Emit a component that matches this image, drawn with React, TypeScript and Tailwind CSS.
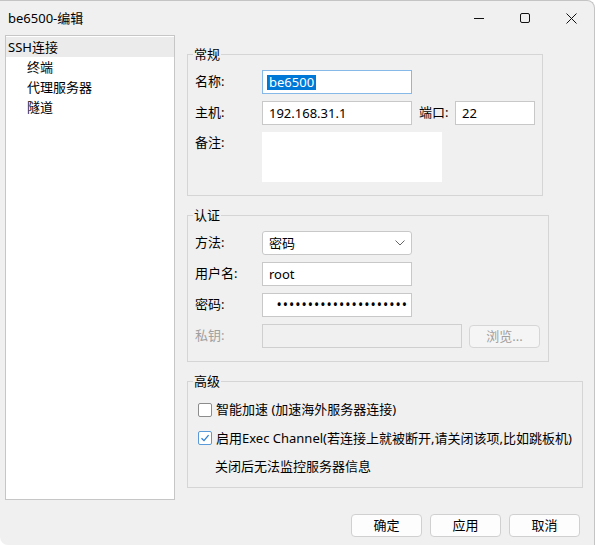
import { useState } from "react";

const font = "font-['Noto_Sans','Noto_Sans_CJK_SC',sans-serif]";

const treeItems = [
    { id: "ssh", title: "SSH连接", depth: 0 },
    { id: "term", title: "终端", depth: 1 },
    { id: "proxy", title: "代理服务器", depth: 1 },
    { id: "tunnel", title: "隧道", depth: 1 },
];

const Group = ({ title, width, children }: { title: string; width: string; children: React.ReactNode }) => (
    <fieldset className={`${width} border border-[#d5d5d5] px-[7px]`}>
        <legend className="px-[1px] ml-[-2px] text-[13px] leading-[17px]">{title}</legend>
        {children}
    </fieldset>
);

const Row = ({ label, disabled, children }: { label: string; disabled?: boolean; children: React.ReactNode }) => (
    <div className="flex items-center h-[24px]">
        <span className={`w-[67px] shrink-0 ${disabled ? "text-[#a0a0a0]" : "text-black"}`}>{label}</span>
        {children}
    </div>
);

const Input = ({ value, width = "w-[150px]" }: { value: string; width?: string }) => (
    <div className={`${width} h-[24px] bg-white border border-[#c8c8c8] flex items-center px-[6px] leading-none`}>{value}</div>
);

const Checkbox = ({ checked }: { checked: boolean }) => (
    <span
        className={`w-[14px] h-[14px] rounded-[2px] border bg-white flex items-center justify-center shrink-0 ${
            checked ? "border-[#5a9ad8]" : "border-[#8c8c8c]"
        }`}
    >
        {checked && (
            <svg width="10" height="10" viewBox="0 0 10 10" fill="none">
                <path d="M1.5 5.2 L4 7.6 L8.6 2.2" stroke="#2f7fd0" strokeWidth="1.3" />
            </svg>
        )}
    </span>
);

const Button = ({ label, disabled }: { label: string; disabled?: boolean }) => (
    <button
        className={`w-[71px] h-[23px] rounded-[4px] border text-[13px] leading-none flex items-center justify-center ${
            disabled ? "border-[#d6d6d6] bg-[#f5f5f5] text-[#a0a0a0]" : "border-[#d0d0d0] bg-[#fdfdfd] text-black"
        }`}
    >
        {label}
    </button>
);

const App = () => {
    const [active, setActive] = useState("ssh");
    const [accel, setAccel] = useState(false);
    const [exec, setExec] = useState(true);

    return (
        <div className={`w-[595px] h-[545px] bg-white ${font} text-[13px] text-black`}>
            <div className="w-full h-full bg-[#f0f0f0] border-t border-r border-[#c4c4c4] rounded-tr-[8px] rounded-bl-[8px] flex flex-col overflow-hidden">
                {/* title bar */}
                <div className="h-[34px] flex items-center shrink-0">
                    <span className="ml-[8px] text-[13px] leading-none">be6500-编辑</span>
                    <div className="ml-auto flex items-center">
                        <div className="w-[46px] h-[32px] flex items-center justify-center">
                            <svg width="10" height="10" viewBox="0 0 10 10"><path d="M0 5.5 H10" stroke="#111" strokeWidth="1" /></svg>
                        </div>
                        <div className="w-[46px] h-[32px] flex items-center justify-center">
                            <svg width="10" height="10" viewBox="0 0 10 10" fill="none"><rect x="0.5" y="0.5" width="9" height="9" rx="1.5" stroke="#111" strokeWidth="1" /></svg>
                        </div>
                        <div className="w-[46px] h-[32px] flex items-center justify-center">
                            <svg width="11" height="11" viewBox="0 0 11 11"><path d="M0.5 0.5 L10.5 10.5 M10.5 0.5 L0.5 10.5" stroke="#111" strokeWidth="1" /></svg>
                        </div>
                    </div>
                </div>

                <div className="flex">
                    {/* tree */}
                    <div className="w-[170px] h-[465px] ml-[5px] bg-white border border-[#c6c6c6] pt-[1px]">
                        {treeItems.map((item) => (
                            <div
                                key={item.id}
                                onClick={() => setActive(item.id)}
                                className={`h-[20px] flex items-center leading-none cursor-default ${item.depth ? "pl-[21px]" : "pl-[2px]"} ${
                                    active === item.id ? "bg-[#ebebeb]" : ""
                                }`}
                            >
                                {item.title}
                            </div>
                        ))}
                    </div>

                    {/* settings */}
                    <div className="ml-[12px] pt-[11px] flex flex-col gap-[11px]">
                        <Group title="常规" width="w-[356px]">
                            <div className="flex flex-col gap-[7px] pt-[7px] pb-[13px]">
                                <Row label="名称:">
                                    <div className="w-[150px] h-[24px] bg-white border border-[#86b8e8] flex items-center px-[4px]">
                                        <span className="bg-[#0078d7] text-white px-[2px] leading-[15px]">be6500</span>
                                    </div>
                                </Row>
                                <Row label="主机:">
                                    <Input value="192.168.31.1" />
                                    <span className="ml-[7px] w-[36px]">端口:</span>
                                    <Input value="22" width="w-[80px]" />
                                </Row>
                                <div className="flex items-start">
                                    <span className="w-[67px] shrink-0 pt-[1px]">备注:</span>
                                    <div className="w-[180px] h-[50px] bg-white" />
                                </div>
                            </div>
                        </Group>

                        <Group title="认证" width="w-[362px]">
                            <div className="flex flex-col gap-[7px] pt-[7px] pb-[13px]">
                                <Row label="方法:">
                                    <div className="w-[150px] h-[24px] bg-white border border-[#c8c8c8] rounded-[3px] flex items-center pl-[6px] pr-[6px]">
                                        <span className="leading-none">密码</span>
                                        <svg className="ml-auto" width="10" height="6" viewBox="0 0 10 6" fill="none">
                                            <path d="M0.5 0.5 L5 5 L9.5 0.5" stroke="#666" strokeWidth="1" />
                                        </svg>
                                    </div>
                                </Row>
                                <Row label="用户名:">
                                    <Input value="root" />
                                </Row>
                                <Row label="密码:">
                                    <div className="w-[150px] h-[24px] bg-white border border-[#c8c8c8] flex items-center justify-end pr-[3px]">
                                        <span className="whitespace-nowrap text-[14px] tracking-[1px] leading-none">•••••••••••••••••••••</span>
                                    </div>
                                </Row>
                                <Row label="私钥:" disabled>
                                    <div className="w-[200px] h-[24px] bg-[#f0f0f0] border border-[#cfcfcf]" />
                                    <div className="ml-[7px]">
                                        <Button label="浏览..." disabled />
                                    </div>
                                </Row>
                            </div>
                        </Group>

                        <Group title="高级" width="w-[396px]">
                            <div className="flex flex-col pt-[5px] pb-[7px] pl-[3px]">
                                <label className="h-[29px] flex items-center gap-[4px]" onClick={() => setAccel(!accel)}>
                                    <Checkbox checked={accel} />
                                    <span className="leading-none">智能加速 (加速海外服务器连接)</span>
                                </label>
                                <label className="h-[28px] flex items-center gap-[4px]" onClick={() => setExec(!exec)}>
                                    <Checkbox checked={exec} />
                                    <span className="leading-none">启用Exec Channel(若连接上就被断开,请关闭该项,比如跳板机)</span>
                                </label>
                                <div className="h-[28px] flex items-center pl-[17px] leading-none">关闭后无法监控服务器信息</div>
                            </div>
                        </Group>
                    </div>
                </div>

                {/* footer */}
                <div className="flex justify-end gap-[8px] pr-[14px] mt-[14px]">
                    <Button label="确定" />
                    <Button label="应用" />
                    <Button label="取消" />
                </div>
            </div>
        </div>
    );
};

export default App;
